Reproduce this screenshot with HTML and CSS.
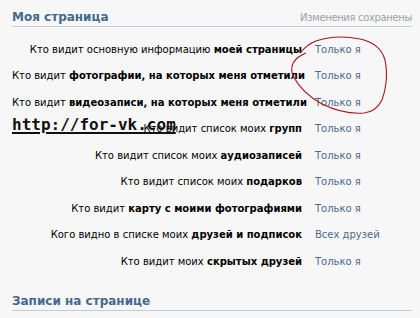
FILE: index.html
```html
<!DOCTYPE html>
<html lang="ru">
<head>
<meta charset="utf-8">
<link rel="stylesheet" href="styles.css">
</head>
<body>
<div class="page">
  <div class="head">
    <div class="title">Моя страница</div>
    <div class="saved">Изменения сохранены</div>
  </div>
  <div class="rows">
    <div class="row"><div class="label">Кто видит основную информацию <b>моей страницы</b></div><div class="value">Только я</div></div>
    <div class="row"><div class="label">Кто видит <b>фотографии, на которых меня отметили</b></div><div class="value">Только я</div></div>
    <div class="row"><div class="label">Кто видит <b>видеозаписи, на которых меня отметили</b></div><div class="value">Только я</div></div>
    <div class="row"><div class="label">Кто видит список моих <b>групп</b></div><div class="value">Только я</div></div>
    <div class="row"><div class="label">Кто видит список моих <b>аудиозаписей</b></div><div class="value">Только я</div></div>
    <div class="row"><div class="label">Кто видит список моих <b>подарков</b></div><div class="value">Только я</div></div>
    <div class="row"><div class="label">Кто видит <b>карту с моими фотографиями</b></div><div class="value">Только я</div></div>
    <div class="row"><div class="label">Кого видно в списке моих <b>друзей и подписок</b></div><div class="value">Всех друзей</div></div>
    <div class="row"><div class="label">Кто видит моих <b>скрытых друзей</b></div><div class="value">Только я</div></div>
  </div>
  <div class="head head2">
    <div class="title">Записи на странице</div>
  </div>
  <div class="watermark">http://for-vk.com</div>
  <svg class="scribble" width="420" height="318" viewBox="0 0 420 318">
    <path d="M301 52 C306 46 311 43 316 41 C328 37 345 36 360 39 C374 42 382 49 385 60 C388 74 386 90 382 100 C378 108 373 112 364 113 C350 114 334 110 322 104 C309 97 299 87 293 76 C290 69 292 63 297 58 C300 56 303 54 306 53" fill="none" stroke="#b0101a" stroke-width="1.1"/>
  </svg>
</div>
</body>
</html>
```
FILE: styles.css
```css
html, body {
  margin: 0;
  padding: 0;
  background: #f7f7f7;
}
.page {
  position: relative;
  width: 420px;
  height: 318px;
  overflow: hidden;
  font-family: "DejaVu Sans", Tahoma, sans-serif;
  font-size: 10px;
  color: #000;
}
.head {
  display: flex;
  justify-content: space-between;
  align-items: flex-end;
  margin: 0 8px 0 12px;
  padding-top: 10px;
  height: 16px;
  border-bottom: 1px solid #c3cad3;
}
.title {
  font-weight: bold;
  font-size: 12px;
  color: #45688e;
  padding-bottom: 2px;
}
.saved {
  color: #a0a0a0;
  font-size: 10px;
  letter-spacing: -0.35px;
  padding-bottom: 3px;
}
.head2 {
  padding-top: 0;
  margin-top: 19px;
}
.rows {
  display: flex;
  flex-direction: column;
  padding-top: 9px;
  margin-left: 12px;
}
.row {
  display: grid;
  grid-template-columns: 290px auto;
  column-gap: 13px;
  height: 26.5px;
  align-items: center;
}
.label {
  text-align: right;
  white-space: nowrap;
}
.label b {
  font-weight: bold;
}
.value {
  color: #4a6a8e;
  white-space: nowrap;
}
.watermark {
  position: absolute;
  left: 12px;
  top: 115px;
  font-family: "DejaVu Sans Mono", monospace;
  font-weight: bold;
  font-size: 16px;
  color: #111;
  text-decoration: underline;
  text-decoration-thickness: 2px;
  text-underline-offset: 2px;
}
.scribble {
  position: absolute;
  left: 0;
  top: 0;
}
```
